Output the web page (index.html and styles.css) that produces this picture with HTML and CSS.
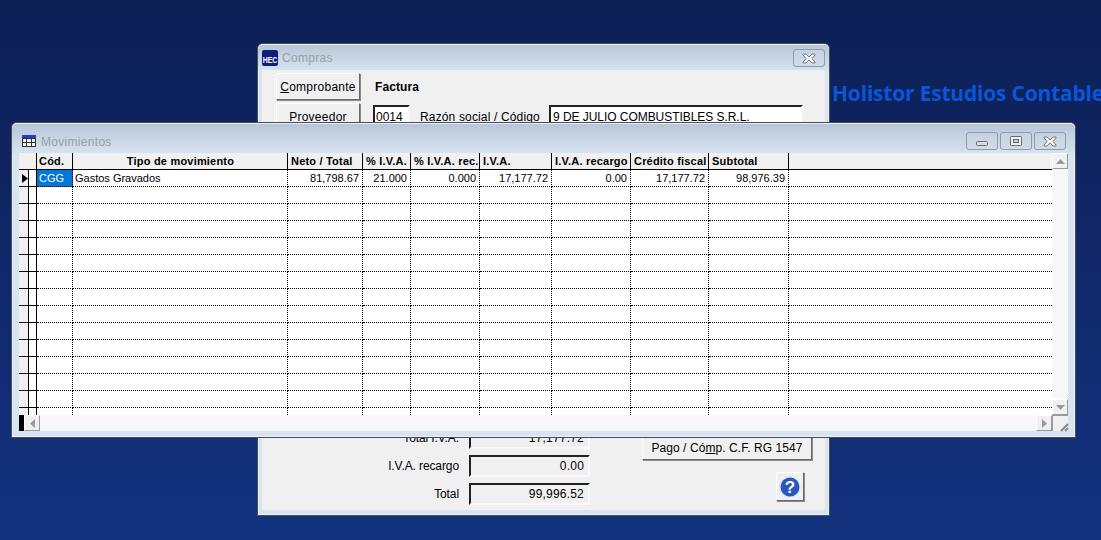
FILE: index.html
```html
<!DOCTYPE html>
<html lang="en">
<head>
	<meta charset="UTF-8">
	<title>Movimientos</title>
	<link rel="stylesheet" href="styles.css">
</head>
<body>
	<div class="brand">Holistor Estudios Contable</div>

	<div class="window compras">
		<div class="titlebar">
			<svg class="hec" width="16" height="16" viewBox="0 0 16 16"><rect width="16" height="16" rx="2" fill="#0c1f7c"/><text transform="translate(8 12.500) scale(1 1.400)" text-anchor="middle" font-family="Liberation Sans" font-weight="700" font-size="7" fill="#fff">HEC</text></svg>
			<span class="title">Compras</span>
			<div class="controls">
				<button class="ctl">
					<svg width="14" height="11" viewBox="0 0 14 11"><path d="M1 1h3l3 3 3-3h3v1l-3 3.500 3 3.500v1h-3l-3-3-3 3h-3v-1l3-3.500-3-3.500z" fill="#f4f4f4" stroke="#7c7c7c"/></svg>
				</button>
			</div>
		</div>
		<div class="form">
			<div class="form-top">
				<div class="form-row first">
					<button class="btn wide"><u>C</u>omprobante</button>
					<b class="doc">Factura</b>
				</div>
				<div class="form-row">
					<button class="btn wide">Proveedor</button>
					<span class="input code">0014</span>
					<span class="lbl">Razón social / Código</span>
					<span class="input name">9 DE JULIO COMBUSTIBLES S.R.L.</span>
				</div>
			</div>
			<div class="form-bottom">
				<div class="totals">
					<div class="total"><span class="total-lbl">Total I.V.A.</span><span class="input amount">17,177.72</span></div>
					<div class="total"><span class="total-lbl">I.V.A. recargo</span><span class="input amount">0.00</span></div>
					<div class="total"><span class="total-lbl">Total</span><span class="input amount">99,996.52</span></div>
				</div>
				<div class="side">
					<button class="btn pago">Pago / Có<u>m</u>p. C.F. RG 1547</button>
					<button class="btn help">
						<svg width="24" height="24" viewBox="0 0 24 24"><circle cx="12" cy="12" r="11" fill="#dfe6f7"/><circle cx="12" cy="12" r="9.500" fill="#2a58b8"/><text x="12" y="18" text-anchor="middle" font-family="Liberation Sans" font-weight="700" font-size="17" fill="#fff">?</text></svg>
					</button>
				</div>
			</div>
		</div>
	</div>

	<div class="window movimientos">
		<div class="titlebar">
			<svg class="gridicon" width="14" height="12" viewBox="0 0 14 12"><rect width="14" height="12" fill="#333"/><rect width="14" height="3" fill="#1f3fd0"/><path d="M1 4h3v3h-3zM5 4h4v3h-4zM10 4h3v3h-3zM1 8h3v3h-3zM5 8h4v3h-4zM10 8h3v3h-3z" fill="#f2f2f2"/></svg>
			<span class="title">Movimientos</span>
			<div class="controls">
				<button class="ctl">
					<svg class="min-icon" width="12" height="5" viewBox="0 0 12 5"><rect x=".5" y=".5" width="11" height="4" rx="1" fill="#d8d8d8" stroke="#6f6f6f"/></svg>
				</button>
				<button class="ctl">
					<svg width="12" height="10" viewBox="0 0 12 10"><rect x=".5" y=".5" width="11" height="9" rx="1" fill="#f2f2f2" stroke="#666"/><rect x="3.500" y="3.500" width="5" height="3" fill="#c4d0de" stroke="#666"/></svg>
				</button>
				<button class="ctl">
					<svg width="14" height="11" viewBox="0 0 14 11"><path d="M1 1h3l3 3 3-3h3v1l-3 3.500 3 3.500v1h-3l-3-3-3 3h-3v-1l3-3.500-3-3.500z" fill="#f4f4f4" stroke="#7c7c7c"/></svg>
				</button>
			</div>
		</div>
		<div class="panel">
			<div class="grid">
				<div class="row head">
					<div class="cell ind-head"></div>
					<div class="cell first-head">Cód.</div>
					<div class="cell center">Tipo de movimiento</div>
					<div class="cell">Neto / Total</div>
					<div class="cell">% I.V.A.</div>
					<div class="cell">% I.V.A. rec.</div>
					<div class="cell">I.V.A.</div>
					<div class="cell">I.V.A. recargo</div>
					<div class="cell">Crédito fiscal</div>
					<div class="cell">Subtotal</div>
					<div class="cell"></div>
				</div>
				<div class="row">
					<div class="cell ind"><svg width="6" height="9" viewBox="0 0 6 9"><path d="M0 0l6 4.500-6 4.500z"/></svg></div>
					<div class="cell ind2"></div>
					<div class="cell sel">CGG</div>
					<div class="cell">Gastos Gravados</div>
					<div class="cell num">81,798.67</div>
					<div class="cell num">21.000</div>
					<div class="cell num">0.000</div>
					<div class="cell num">17,177.72</div>
					<div class="cell num">0.00</div>
					<div class="cell num">17,177.72</div>
					<div class="cell num">98,976.39</div>
					<div class="cell"></div>
				</div>
				<div class="row"><div class="cell ind"></div><div class="cell ind2"></div><div class="cell"></div><div class="cell"></div><div class="cell"></div><div class="cell"></div><div class="cell"></div><div class="cell"></div><div class="cell"></div><div class="cell"></div><div class="cell"></div><div class="cell"></div></div>
				<div class="row"><div class="cell ind"></div><div class="cell ind2"></div><div class="cell"></div><div class="cell"></div><div class="cell"></div><div class="cell"></div><div class="cell"></div><div class="cell"></div><div class="cell"></div><div class="cell"></div><div class="cell"></div><div class="cell"></div></div>
				<div class="row"><div class="cell ind"></div><div class="cell ind2"></div><div class="cell"></div><div class="cell"></div><div class="cell"></div><div class="cell"></div><div class="cell"></div><div class="cell"></div><div class="cell"></div><div class="cell"></div><div class="cell"></div><div class="cell"></div></div>
				<div class="row"><div class="cell ind"></div><div class="cell ind2"></div><div class="cell"></div><div class="cell"></div><div class="cell"></div><div class="cell"></div><div class="cell"></div><div class="cell"></div><div class="cell"></div><div class="cell"></div><div class="cell"></div><div class="cell"></div></div>
				<div class="row"><div class="cell ind"></div><div class="cell ind2"></div><div class="cell"></div><div class="cell"></div><div class="cell"></div><div class="cell"></div><div class="cell"></div><div class="cell"></div><div class="cell"></div><div class="cell"></div><div class="cell"></div><div class="cell"></div></div>
				<div class="row"><div class="cell ind"></div><div class="cell ind2"></div><div class="cell"></div><div class="cell"></div><div class="cell"></div><div class="cell"></div><div class="cell"></div><div class="cell"></div><div class="cell"></div><div class="cell"></div><div class="cell"></div><div class="cell"></div></div>
				<div class="row"><div class="cell ind"></div><div class="cell ind2"></div><div class="cell"></div><div class="cell"></div><div class="cell"></div><div class="cell"></div><div class="cell"></div><div class="cell"></div><div class="cell"></div><div class="cell"></div><div class="cell"></div><div class="cell"></div></div>
				<div class="row"><div class="cell ind"></div><div class="cell ind2"></div><div class="cell"></div><div class="cell"></div><div class="cell"></div><div class="cell"></div><div class="cell"></div><div class="cell"></div><div class="cell"></div><div class="cell"></div><div class="cell"></div><div class="cell"></div></div>
				<div class="row"><div class="cell ind"></div><div class="cell ind2"></div><div class="cell"></div><div class="cell"></div><div class="cell"></div><div class="cell"></div><div class="cell"></div><div class="cell"></div><div class="cell"></div><div class="cell"></div><div class="cell"></div><div class="cell"></div></div>
				<div class="row"><div class="cell ind"></div><div class="cell ind2"></div><div class="cell"></div><div class="cell"></div><div class="cell"></div><div class="cell"></div><div class="cell"></div><div class="cell"></div><div class="cell"></div><div class="cell"></div><div class="cell"></div><div class="cell"></div></div>
				<div class="row"><div class="cell ind"></div><div class="cell ind2"></div><div class="cell"></div><div class="cell"></div><div class="cell"></div><div class="cell"></div><div class="cell"></div><div class="cell"></div><div class="cell"></div><div class="cell"></div><div class="cell"></div><div class="cell"></div></div>
				<div class="row"><div class="cell ind"></div><div class="cell ind2"></div><div class="cell"></div><div class="cell"></div><div class="cell"></div><div class="cell"></div><div class="cell"></div><div class="cell"></div><div class="cell"></div><div class="cell"></div><div class="cell"></div><div class="cell"></div></div>
				<div class="row"><div class="cell ind"></div><div class="cell ind2"></div><div class="cell"></div><div class="cell"></div><div class="cell"></div><div class="cell"></div><div class="cell"></div><div class="cell"></div><div class="cell"></div><div class="cell"></div><div class="cell"></div><div class="cell"></div></div>
				<div class="row"><div class="cell ind"></div><div class="cell ind2"></div><div class="cell"></div><div class="cell"></div><div class="cell"></div><div class="cell"></div><div class="cell"></div><div class="cell"></div><div class="cell"></div><div class="cell"></div><div class="cell"></div><div class="cell"></div></div>
			</div>
			<div class="vscroll">
				<div class="sb-btn"><svg width="9" height="5" viewBox="0 0 9 5"><path d="M4.500 0l4.500 5h-9z"/></svg></div>
				<div class="sb-track"></div>
				<div class="sb-btn"><svg width="9" height="5" viewBox="0 0 9 5"><path d="M0 0h9l-4.500 5z"/></svg></div>
			</div>
			<div class="hscroll">
				<div class="sb-mark"></div>
				<div class="sb-btn"><svg width="5" height="9" viewBox="0 0 5 9"><path d="M5 0v9l-5-4.500z"/></svg></div>
				<div class="sb-track"></div>
				<div class="sb-btn"><svg width="5" height="9" viewBox="0 0 5 9"><path d="M0 0v9l5-4.500z"/></svg></div>
			</div>
			<div class="grip">
				<svg width="16" height="16" viewBox="0 0 16 16"><path d="M15 8l-7 7M15 12l-3 3" stroke="#8a8a8a" stroke-width="2" fill="none"/></svg>
			</div>
		</div>
	</div>
</body>
</html>
```

FILE: styles.css
```css
* {
	box-sizing: border-box;
}
html,
body {
	margin: 0;
	height: 100%;
	overflow: hidden;
}
body {
	position: relative;
	font: 12px 'Liberation Sans', Arial, sans-serif;
	color: #000;
	background: linear-gradient(#0d1f55, #13327f);
}

.brand {
	position: absolute;
	left: 832px;
	top: 79px;
	font: bold 21px 'Open Sans', sans-serif;
	letter-spacing: -.2px;
	color: #0a55d8;
	white-space: nowrap;
}

/* windows on the desktop */
.window {
	position: absolute;
	display: flex;
	flex-direction: column;
	background: #d8e4f1;
	border: 1px solid #4a4f57;
	border-radius: 6px 6px 0 0;
	box-shadow: inset 0 0 0 1px #e8eef5;
}
.compras {
	left: 257px;
	top: 43px;
	width: 573px;
	height: 473px;
	padding: 0 4px 5px;
}
.movimientos {
	left: 11px;
	top: 122px;
	width: 1065px;
	height: 316px;
	padding: 0 7px 6px 7px;
}

.titlebar {
	display: flex;
	align-items: center;
	margin: 0 -4px;
	padding: 1px 4px 0;
	height: 26px;
	background: linear-gradient(#b8c7d8, #d5e2f0);
	border-radius: 5px 5px 0 0;
	border-top: 1px solid #e8eef5;
}
.movimientos .titlebar {
	height: 30px;
	margin: 0 -7px;
	padding: 5px 9px 0 10px;
}
.title {
	margin-left: 4px;
	font-size: 12px;
	letter-spacing: .3px;
	color: #9a9fa6;
}
.movimientos .title {
	margin: 2px 0 0 5px;
}
.controls {
	margin-left: auto;
	display: flex;
	gap: 2px;
}
.ctl {
	width: 32px;
	height: 18px;
	padding: 0;
	display: flex;
	align-items: center;
	justify-content: center;
	background: linear-gradient(#c5d2e0, #d0dcea);
	border: 1px solid #8b9bb0;
	border-radius: 3px;
}
.min-icon {
	margin-top: 5px;
}

/* compras form */
.form {
	flex: 1;
	display: flex;
	flex-direction: column;
	justify-content: space-between;
	background: #f0f0f0;
	padding: 3px 25px 5px 14px;
	min-height: 0;
}
.form-top {
	display: flex;
	flex-direction: column;
	gap: 3px;
}
.form-row {
	display: flex;
	align-items: flex-start;
}
.form-row.first {
	align-items: center;
}
.btn {
	flex: none;
	font: 12px 'Liberation Sans', Arial, sans-serif;
	letter-spacing: .25px;
	background: #f0f0f0;
	color: #000;
	padding: 0;
	border: 1px solid;
	border-color: #fff #696969 #696969 #fff;
	box-shadow: 1px 1px 0 #8a8a8a;
}
.btn.wide {
	width: 84px;
	height: 27px;
}
.doc {
	margin-left: 15px;
	letter-spacing: .1px;
}
.input {
	display: block;
	flex: none;
	background: #fff;
	border: 2px solid;
	border-color: #222 #f8f8f8 #f8f8f8 #222;
	white-space: nowrap;
}
.code {
	margin: 2px 0 0 13px;
	width: 37px;
	height: 24px;
	padding: 3px 2px 3px 1px;
}
.lbl {
	flex: none;
	margin: 7px 0 0 10px;
	width: 129px;
	white-space: nowrap;
	letter-spacing: .15px;
}
.name {
	margin-top: 2px;
	width: 254px;
	height: 24px;
	padding: 3px 2px;
	letter-spacing: -.05px;
}

.form-bottom {
	display: flex;
	align-items: flex-end;
}
.totals {
	display: flex;
	flex-direction: column;
	gap: 6px;
}
.total {
	display: flex;
	align-items: center;
}
.total-lbl {
	width: 183px;
	text-align: right;
	letter-spacing: -.1px;
}
.amount {
	margin-left: 10px;
	width: 121px;
	height: 22px;
	padding: 2px 4px;
	text-align: right;
	background: #f0f0f0;
	letter-spacing: .2px;
}
.side {
	margin-left: 52px;
	display: flex;
	flex-direction: column;
	align-items: flex-end;
	width: 170px;
}
.pago {
	width: 170px;
	height: 24px;
	margin-bottom: 12px;
	letter-spacing: .07px;
}
.help {
	width: 28px;
	height: 29px;
	margin: 0 8px 4px 0;
	display: flex;
	align-items: center;
	justify-content: center;
}

/* movimientos panel */
.panel {
	flex: 1;
	min-height: 0;
	display: grid;
	grid-template-columns: 1fr 16px;
	grid-template-rows: 1fr 16px;
}
.grid {
	background: #fff;
	overflow: hidden;
	min-height: 0;
	font-size: 11px;
}
.row {
	display: grid;
	grid-template-columns: 10px 8px 36px 215px 75px 48px 69px 72px 79px 78px 80px 1fr;
	height: 17px;
}
.row.head {
	grid-template-columns: 18px 36px 215px 75px 48px 69px 72px 79px 78px 80px 1fr;
	background: #f0f0f0;
	font-weight: bold;
	letter-spacing: .2px;
}
.cell {
	border-right: 1px dotted #000;
	border-bottom: 1px dotted #000;
	padding: 1px 2px 0;
	white-space: nowrap;
	overflow: hidden;
	line-height: 14px;
}
.head .cell {
	border-right: 1px solid #000;
	border-bottom: 1px solid #000;
	padding-left: 3px;
}
.head .first-head {
	padding-left: 2px;
}
.head .cell:last-child,
.row .cell:last-child {
	border-right: 0;
}
.center {
	text-align: center;
}
.ind,
.ind2 {
	border-right: 1px solid #000;
	border-bottom: 1px solid #000;
}
.ind {
	background: #f0f0f0;
	padding: 4px 0 0 3px;
}
.ind svg {
	display: block;
}
.sel {
	background: #0078d7;
	color: #fff;
}
.num {
	text-align: right;
	padding-right: 3px;
}

/* scroll bars */
.vscroll {
	display: flex;
	flex-direction: column;
}
.hscroll {
	display: flex;
}
.sb-track {
	flex: 1;
	background: repeating-conic-gradient(#f0f0f0 0 25%, #fff 0 50%) 0 0 / 2px 2px;
}
.sb-btn {
	flex: none;
	width: 16px;
	height: 16px;
	display: flex;
	align-items: center;
	justify-content: center;
	background: #f0f0f0;
	border: 1px solid;
	border-color: #fff #9a9a9a #9a9a9a #fff;
	fill: #9a9a9a;
}
.sb-mark {
	width: 5px;
	background: #000;
}
.grip {
	background: #f0f0f0;
	border-top: 1px solid #9a9a9a;
	border-left: 1px solid #9a9a9a;
}
.grip svg {
	display: block;
}
```
